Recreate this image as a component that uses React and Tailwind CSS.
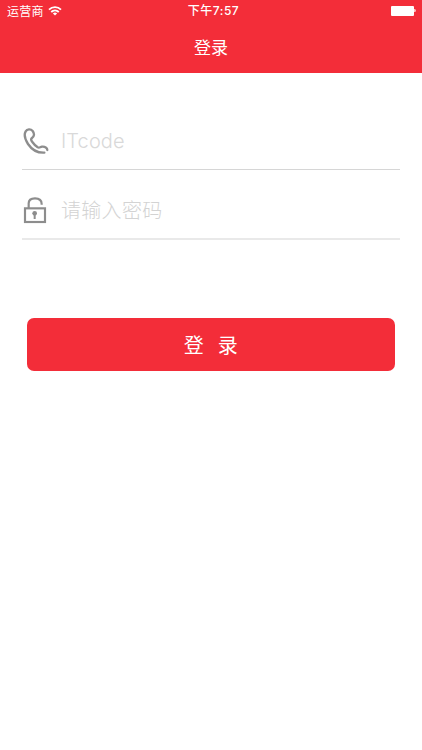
const PhoneIcon = () => (
  <svg className="h-7 w-7 shrink-0" viewBox="0 0 84 84" fill="none" stroke="#8d8d8d" strokeWidth="7" strokeLinecap="round" strokeLinejoin="round">
    <path d="M67 77C45 78 28 66 18 51C9 37 6 22 11 13C15 6 26 5 32 12C38 20 37 28 30 33C26 36 27 40 31 45C36 52 41 57 47 61C52 64 54 60 60 59C69 58 76 63 76 69" />
  </svg>
);

const LockIcon = () => (
  <svg className="h-7 w-7 shrink-0" viewBox="0 0 84 84" fill="none" stroke="#8d8d8d">
    <rect x="9" y="37" width="60" height="41" strokeWidth="6.5" />
    <path d="M20 36V22C20 12 27 7 39 7C52 7 59 13 59 24V26" strokeWidth="6.5" />
    <circle cx="38" cy="52" r="7" fill="#8d8d8d" stroke="none" />
    <path d="M38 54V69" strokeWidth="6" />
  </svg>
);

const WifiIcon = () => (
  <svg className="ml-1 h-[10px] w-[14px]" viewBox="0 0 14 10" fill="none" stroke="white" strokeWidth="1.8">
    <path d="M1 3.6C4.3.3 9.7.3 13 3.6M3.2 6C5.4 3.9 8.6 3.9 10.8 6" />
    <path d="M7 9.5L4.9 7.4C6.1 6.3 7.9 6.3 9.1 7.4Z" fill="white" stroke="none" />
  </svg>
);

export default function App() {
  return (
    <div className="h-[750px] w-full overflow-hidden bg-white font-['Liberation_Sans','Noto_Sans_CJK_SC',sans-serif]">
      <header className="h-[73px] bg-[#f32d39] text-white">
        <div className="grid h-[21px] grid-cols-3 items-center pl-[7px] pr-[6px] text-xs leading-none">
          <div className="flex items-center font-['Noto_Sans_CJK_SC',sans-serif] tracking-[0.2px]">
            <span>运营商</span>
            <WifiIcon />
          </div>
          <div className="whitespace-nowrap pl-[4px] pt-px text-center font-['Inter','Noto_Sans_CJK_SC',sans-serif] font-medium tracking-[0.5px]">下午7:57</div>
          <div className="flex items-center justify-end">
            <div className="h-[10px] w-[23px] rounded-[1px] bg-white" />
            <div className="h-[3px] w-[2px] rounded-r-sm bg-[#ffc0c4]" />
          </div>
        </div>
        <h1 className="flex h-[50px] items-center justify-center font-['Noto_Sans_CJK_SC',sans-serif] text-[17px] leading-none">登录</h1>
      </header>
      <main className="px-[22px] pt-[40px]">
        <div className="flex h-[57px] items-center border-b border-[#d6d6d6]">
          <PhoneIcon />
          <input aria-label="ITcode" placeholder="ITcode" className="ml-[11px] w-64 font-['Inter',sans-serif] text-[20px] font-light tracking-[0.1px] outline-none placeholder:text-[#d9d9d9]" />
        </div>
        <div className="flex h-[70px] items-center border-b-2 border-[#e9e9e9] pt-[12px]">
          <LockIcon />
          <input type="password" aria-label="请输入密码" placeholder="请输入密码" className="-mt-px ml-[11px] w-64 font-['Noto_Sans_CJK_SC',sans-serif] text-[20px] font-light tracking-[0.3px] outline-none placeholder:text-[#d3d3d3]" />
        </div>
        <button className="ml-[4.5px] mt-[78px] flex h-[53px] w-[368.5px] items-center justify-center rounded-[7px] bg-[#f32d39] font-['Noto_Sans_CJK_SC',sans-serif] text-[20px] leading-none text-white">
          <span className="flex gap-[14px]"><span>登</span><span>录</span></span>
        </button>
      </main>
    </div>
  );
}
